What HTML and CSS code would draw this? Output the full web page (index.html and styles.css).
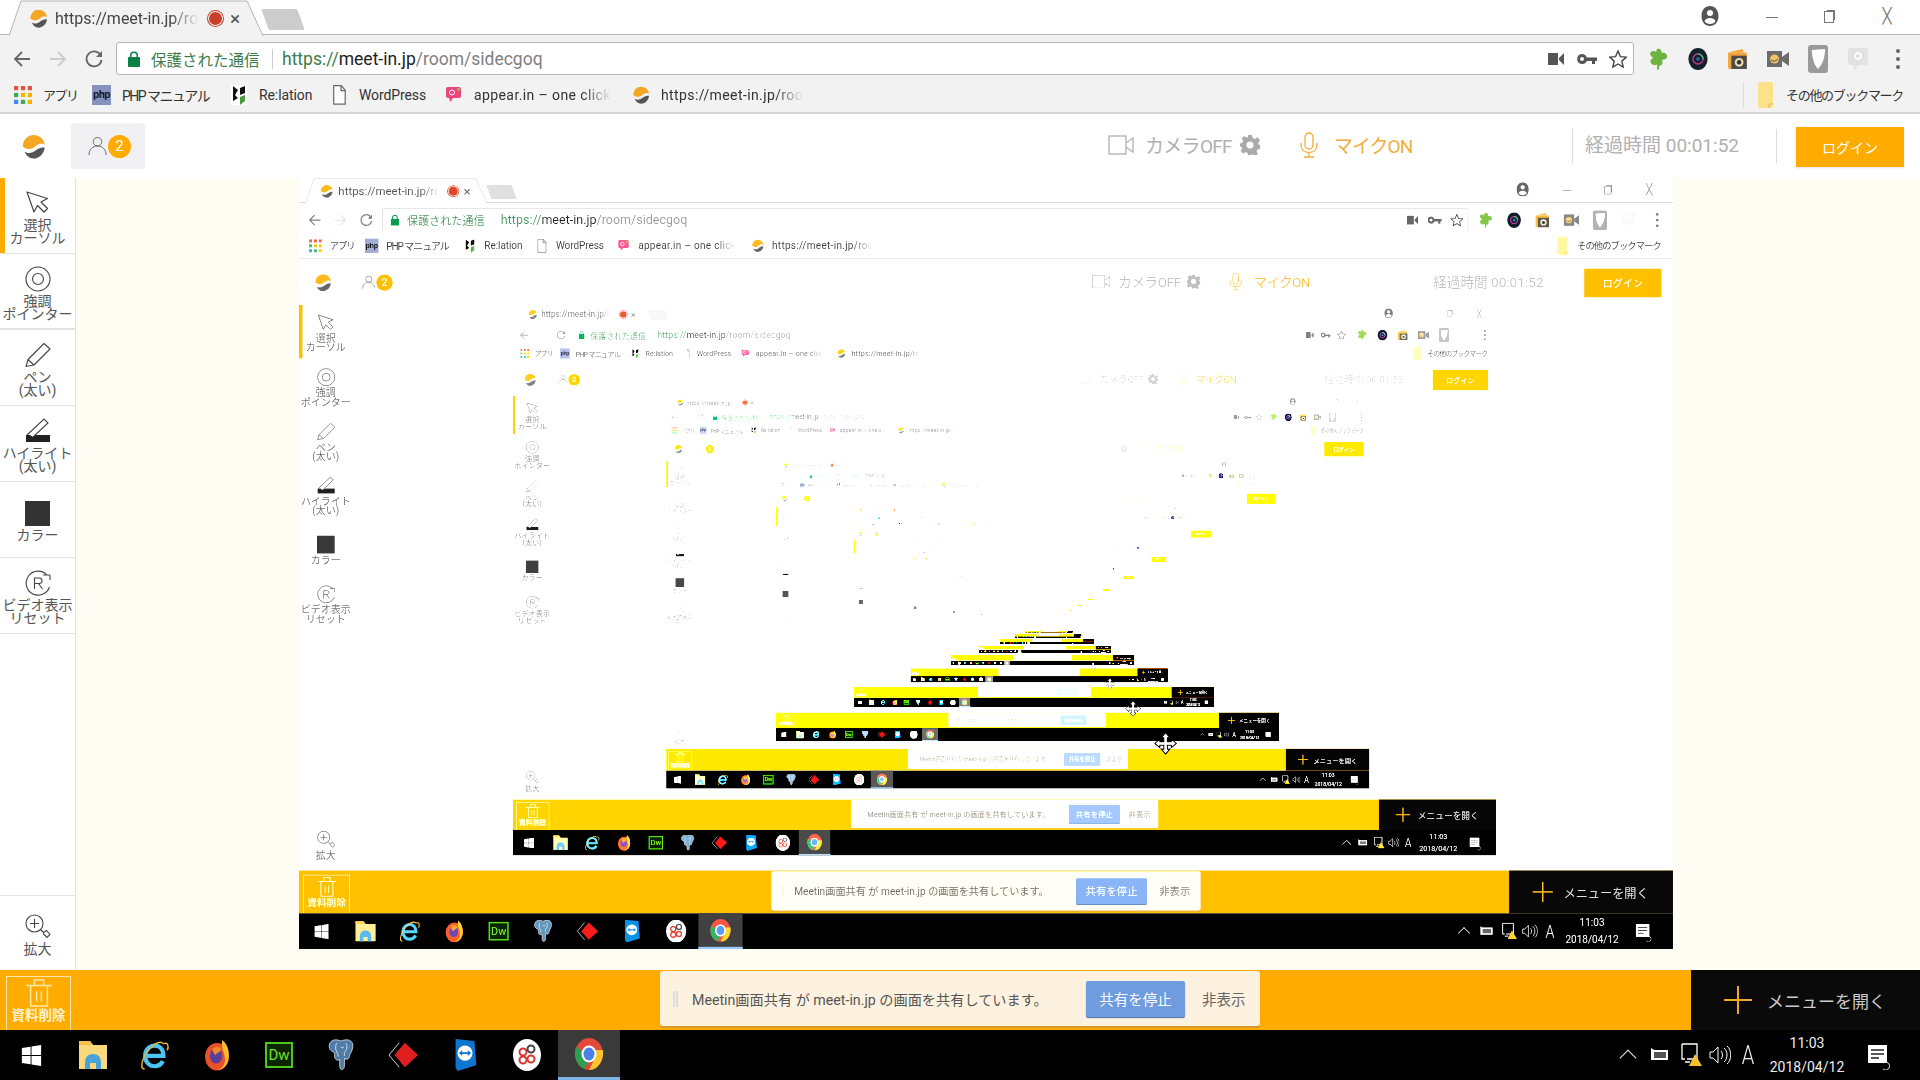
FILE: index.html
```html
<!DOCTYPE html>
<html lang="ja">
<head>
  <meta charset="UTF-8">
  <title>meet-in.jp/room/sidecgoq</title>
  <link rel="stylesheet" href="styles.css">
</head>
<body>

<svg class="sprite" width="0" height="0" aria-hidden="true">
  <defs>
    <!-- what each pass through the screen share does to the colours -->
    <filter id="feedback" color-interpolation-filters="sRGB" x="0" y="0" width="100%" height="100%">
      <feComponentTransfer>
        <feFuncR type="table" tableValues="0 .08 .22 .36 .5 .61 .7 .78 .88 1 1"/>
        <feFuncG type="table" tableValues="0 .08 .22 .36 .5 .61 .7 .78 .88 1 1"/>
        <feFuncB type="table" tableValues="0 .08 .22 .36 .5 .61 .7 .78 .88 1 1"/>
      </feComponentTransfer>
    </filter>
  </defs>

  <symbol id="i-logo" viewBox="0 0 28 28">
    <path fill="#f5a623" d="M2 14C2 6 8 1 14 1c7 0 12 5 12.500 11-4-2.500-7-1-10 1.500-4 3.500-9 5-14.500.5z"/>
    <path fill="#555" d="M4 20c5 3 9 1 13-2 3-2.500 6-3 9.500-3C26 22 20 27.500 14 27.500 9.500 27.500 6 24.500 4 20z"/>
  </symbol>
  <symbol id="i-person" viewBox="0 0 20 20">
    <circle cx="10" cy="5.500" r="4.500" fill="none" stroke="#666"/>
    <path d="M1 19.500c0-6 4-9.500 9-9.500s9 3.500 9 9.500" fill="none" stroke="#666"/>
  </symbol>
  <symbol id="i-camera-off" viewBox="0 0 26 20">
    <path d="M1 1h17v18H1zM18 8l7-5v14l-7-5" fill="none" stroke="#bbb" stroke-width="1.500"/>
  </symbol>
  <symbol id="i-gear" viewBox="0 0 20 20">
    <path fill="#aaa" fill-rule="evenodd" d="M8 0h4l.6 3 2.200 1 2.700-1.700 2.500 3L18.200 8l.3 1.500 1.500.5v4l-2.500.6-1 2 1.500 2.400-3 2.200-2.200-1.900-1.800.5L12 20H8l-.6-2.200-1.900-.7-2.400 1.600-2.500-3 1.700-2.200L1.500 12 0 11.500v-3l2.300-.7.800-2L1.500 3.500l3-2.500 2 1.500L8 2zM10 6.500a3.500 3.500 0 1 0 0 7 3.500 3.500 0 0 0 0-7z"/>
  </symbol>
  <symbol id="i-mic" viewBox="0 0 20 26">
    <rect x="6" y="1" width="8" height="16" rx="4" fill="none" stroke="#f0ae3c" stroke-width="1.300"/>
    <path d="M2 11v2c0 5 3.500 7.500 8 7.500s8-2.500 8-7.500v-2M10 20.500V25M5 25h10" fill="none" stroke="#f0ae3c" stroke-width="1.300"/>
  </symbol>

  <symbol id="i-arrow" viewBox="0 0 26 26">
    <path d="M2 2l7 20 3.500-6.500L19 22l3.500-3.500-6.500-6.500L22.500 8.500z" fill="#fff" stroke="#444" stroke-width="1.200" stroke-linejoin="round"/>
  </symbol>
  <symbol id="i-target" viewBox="0 0 26 26">
    <circle cx="13" cy="13" r="12" fill="none" stroke="#444" stroke-width="1.100"/>
    <circle cx="13" cy="13" r="5.500" fill="none" stroke="#444" stroke-width="1.100"/>
  </symbol>
  <symbol id="i-pen" viewBox="0 0 26 26">
    <path d="M1 24.500l2-7L19 1.500l6 5.500L9 23zM3 17.500l6 5.500" fill="none" stroke="#444" stroke-width="1.100" stroke-linejoin="round"/>
  </symbol>
  <symbol id="i-highlight" viewBox="0 0 26 26">
    <path d="M2 17L19 1l4 4L8 19" fill="none" stroke="#444" stroke-width="1.100"/>
    <path fill="#222" d="M1 17h4l3 2 3-2h14v7H1z"/>
  </symbol>
  <symbol id="i-reset" viewBox="0 0 26 26">
    <path d="M22 5A12 12 0 1 0 24.500 17M25 5h-7M25 5v5" fill="none" stroke="#444" stroke-width="1.100"/>
    <path d="M9.500 19V8h4.500c4 0 4 5.500 0 5.500H9.500M13.500 13.500l4 5.500" fill="none" stroke="#444" stroke-width="1.100"/>
  </symbol>
  <symbol id="i-zoom" viewBox="0 0 26 26">
    <circle cx="9.500" cy="9.500" r="8.500" fill="none" stroke="#444" stroke-width="1.100"/>
    <path d="M5 9.500h9M9.500 5v9M15.500 15.500l3 3M18.500 18.500l3-2 3.500 4-3 3-3.500-3.500z" fill="none" stroke="#444" stroke-width="1.100"/>
  </symbol>
  <symbol id="i-trash" viewBox="0 0 30 30">
    <path d="M1 7h28M10 7V1h10v6M6 7v22h18V7M12.500 13v11M17.500 13v11" fill="none" stroke="#ffe9a8" stroke-width="1.600"/>
  </symbol>

  <symbol id="i-back" viewBox="0 0 18 18">
    <path d="M17 9H2M9 2L2 9l7 7" fill="none" stroke="currentColor" stroke-width="1.800"/>
  </symbol>
  <symbol id="i-reload" viewBox="0 0 18 18">
    <path d="M15.500 5A7.500 7.500 0 1 0 16.500 10" fill="none" stroke="#666" stroke-width="1.800"/>
    <path d="M17 1v6h-6z" fill="#666"/>
  </symbol>
  <symbol id="i-lock" viewBox="0 0 12 16">
    <path fill="#0b8043" d="M1 6h1V4.500a4 4 0 0 1 8 0V6h1a1 1 0 0 1 1 1v8a1 1 0 0 1-1 1H1a1 1 0 0 1-1-1V7a1 1 0 0 1 1-1zm2.500 0h5V4.500a2.500 2.500 0 0 0-5 0z"/>
  </symbol>
  <symbol id="i-video" viewBox="0 0 16 14">
    <path fill="#555" d="M0 1h10v12H0zM11 6l5-5v12l-5-5z"/>
  </symbol>
  <symbol id="i-key" viewBox="0 0 20 12">
    <path fill="#555" fill-rule="evenodd" d="M5 1a5 5 0 0 1 4.800 3.500H20V8h-2v3h-3V8H9.800A5 5 0 1 1 5 1zm0 3a2 2 0 1 0 0 4 2 2 0 0 0 0-4z"/>
  </symbol>
  <symbol id="i-star" viewBox="0 0 18 18">
    <path d="M9 1l2.400 5.600 6 .5-4.600 4 1.400 6L9 14l-5.200 3.100 1.400-6-4.600-4 6-.5z" fill="none" stroke="#444" stroke-width="1.400"/>
  </symbol>
  <symbol id="i-clover" viewBox="0 0 20 22">
    <path fill="#6db33f" d="M9 1c3-1 5 1 4.500 4 3-1 6 1 5.500 4-.5 2.500-3 3-5 2.500 1 3 .5 6-2 6-1 0-1 2-1 4h-2c0-2 .5-4 0-5-3 1.500-6.500 0-6.500-3 0-2 1-3 3-3.500C2 8 1 5 3.500 3.500 5 2.500 7 3 8 4z"/>
  </symbol>
  <symbol id="i-lens" viewBox="0 0 22 24">
    <ellipse cx="11" cy="12" rx="10.500" ry="12" fill="#15202b"/>
    <circle cx="11" cy="12" r="5.500" fill="none" stroke="#c23b8e" stroke-width="1.500"/>
    <path d="M11 6.500a5.500 5.500 0 0 1 5.500 5.500" fill="none" stroke="#3fbf6a" stroke-width="1.500"/>
    <circle cx="11" cy="12" r="2" fill="#1d6fa5"/>
  </symbol>
  <symbol id="i-ext-folder" viewBox="0 0 20 20">
    <path fill="#f2a33a" d="M1 4l13-3 1 3H1z"/>
    <rect x="1" y="4" width="17" height="15" rx="1" fill="#f2a33a"/>
    <rect x="4" y="7" width="14" height="12" fill="#4a4a4a"/>
    <circle cx="11" cy="13" r="4" fill="#e9d9a8"/>
    <circle cx="11" cy="13" r="2" fill="#333"/>
  </symbol>
  <symbol id="i-ext-video" viewBox="0 0 22 18">
    <rect y="1" width="15" height="16" fill="#6c6c6c"/>
    <path fill="#6c6c6c" d="M15 7l7-5v14l-7-5z"/>
    <circle cx="7.500" cy="9" r="4.500" fill="#f0c36a"/>
    <path d="M4 10c2 2 5 1 7-1" stroke="#444" fill="none"/>
  </symbol>
  <symbol id="i-ext-shield" viewBox="0 0 20 28">
    <rect width="20" height="28" rx="3" fill="#9a9a9a"/>
    <path fill="#fff" d="M4 5c4 0 8-1 13-1 0 8-2 15-7 20-4-4-6-11-6-19z"/>
  </symbol>
  <symbol id="i-ext-chat" viewBox="0 0 20 22">
    <rect width="20" height="17" rx="3" fill="#e2e2e2"/>
    <path fill="#e2e2e2" d="M5 16h6l-5 6z"/>
    <circle cx="10" cy="8" r="3" fill="none" stroke="#fff" stroke-width="1.500"/>
  </symbol>

  <symbol id="i-apps" viewBox="0 0 17 17">
    <rect width="4" height="4" fill="#e0533d"/><rect x="6.500" width="4" height="4" fill="#e0533d"/><rect x="13" width="4" height="4" fill="#e0533d"/>
    <rect y="6.500" width="4" height="4" fill="#3bab5a"/><rect x="6.500" y="6.500" width="4" height="4" fill="#f4b400"/><rect x="13" y="6.500" width="4" height="4" fill="#f4b400"/>
    <rect y="13" width="4" height="4" fill="#4285f4"/><rect x="6.500" y="13" width="4" height="4" fill="#3bab5a"/><rect x="13" y="13" width="4" height="4" fill="#f4b400"/>
  </symbol>
  <symbol id="i-relation" viewBox="0 0 16 20">
    <rect width="16" height="20" fill="#fff"/>
    <path fill="#111" d="M2 1l5 4-3 5 3 3-5 3zM9 3l5-2v7l-5 2z"/>
    <path fill="#4c9a3f" d="M9 12l5-2v6l-5 4z"/>
  </symbol>
  <symbol id="i-doc" viewBox="0 0 13 20">
    <path d="M.700.700h7.500l4 4.500v14H.700zM8 .700v5h4.500" fill="#fff" stroke="#666" stroke-width="1.200"/>
  </symbol>
  <symbol id="i-appear" viewBox="0 0 15 15">
    <rect width="15" height="11" rx="2" fill="#e8467c"/>
    <path fill="#e8467c" d="M3 10h5l-4 5z"/>
    <circle cx="6" cy="5.500" r="2.500" fill="none" stroke="#fff"/>
    <rect x="11" y="1" width="3" height="3" fill="#7ac143"/>
  </symbol>
  <symbol id="i-bm-folder" viewBox="0 0 15 26">
    <rect width="15" height="26" rx="2" fill="#fbe188"/>
    <path d="M11 26v-4h4" fill="none" stroke="#e0bd55"/>
  </symbol>
  <symbol id="i-profile" viewBox="0 0 18 20">
    <path fill="#555" fill-rule="evenodd" d="M9 0c5 0 8.500 4 8.500 10S14 20 9 20 .500 16 .500 10 4 0 9 0zm0 4a3 3 0 1 0 0 6 3 3 0 0 0 0-6zM3.500 15c1 2 3 3 5.500 3s4.500-1 5.500-3c-1-2-3-3-5.500-3s-4.500 1-5.500 3z"/>
  </symbol>

  <symbol id="i-win" viewBox="0 0 22 24">
    <path fill="#fff" d="M0 3.500l10-1.500v9.500H0zM11 1.800L22 0v11.500H11zM0 12.500h10V22L0 20.500zM11 12.500h11V24l-11-1.800z"/>
  </symbol>
  <symbol id="i-files" viewBox="0 0 30 32">
    <path fill="#f9d97c" d="M1 2h11l3 4h14v24H1z"/>
    <path fill="#f2c14e" d="M1 2h11l3 4H1z"/>
    <path fill="#4aa3d8" d="M7 24c0-6 3-9 8-9s8 3 8 9v6h-5v-6h-6v6H7z"/>
  </symbol>
  <symbol id="i-ie" viewBox="0 0 32 34">
    <path d="M6 18h19c0-7-4-11-9.500-11S5.500 11.500 5.500 18s4.500 11 10 11c4 0 7-2 9-5.500" fill="none" stroke="#4cc3f1" stroke-width="4.500"/>
    <path d="M25 5C20 0 9 9 4 20c-3 7-3 12 1 12" fill="none" stroke="#e2b93b" stroke-width="1.500"/>
    <path d="M25 5c5-2 6 3 4 7" fill="none" stroke="#e2b93b" stroke-width="1.500"/>
  </symbol>
  <symbol id="i-firefox" viewBox="0 0 28 36">
    <ellipse cx="14" cy="20" rx="13.500" ry="15.500" fill="#e8502a"/>
    <path fill="#ffbd2e" d="M20 1c7 6 8 14 7 21-1 7-6 13-13 13 6-2 9-6 9-12 0-7-5-14-3-22z"/>
    <ellipse cx="13" cy="19" rx="7" ry="8.500" fill="#5a3e9c"/>
    <path fill="#f08a24" d="M9 11c3-3 8-3 11 1-2 0-3 1-3 3-2 0-4 1-4 3-2 0-4-4-4-7z"/>
  </symbol>
  <symbol id="i-pg" viewBox="0 0 30 38">
    <path fill="#4f7ca6" stroke="#e6edf3" stroke-width=".9" d="M1 9c0-5 3-8 8-8 2 0 4 .5 6 1.500C17 1.500 19 1 22 1c5 0 7.500 3.500 7 8-.4 4-2 7-3.500 9.500-1 2-.5 5-3 5.500-1.500.3-2.500-.5-3-1.500-.5 3-.5 7-.5 10 0 3-3 5-4.500 3-1.500-2-1-7-1-11-3 1.500-5.500 0-6-3-.3-2 0-4-1-6C2.500 14 1 12 1 9z"/>
    <path d="M10 5c-2 3-2 8 1 12l1 4M21 5c2 4 1 8-2 11v4M15 9a1.500 1.500 0 1 0 3 0" fill="none" stroke="#e6edf3" stroke-width="1"/>
  </symbol>
  <symbol id="i-diamond" viewBox="0 0 32 30">
    <path d="M12 2L1 15l11 13" fill="none" stroke="#ddd" stroke-width="1"/>
    <path fill="#e02020" d="M18 2l14 13-14 13L7 15z"/>
  </symbol>
  <symbol id="i-tv" viewBox="0 0 24 34">
    <path fill="#0e76d0" d="M2 0l20 2 2 26-20 6-2-4z"/>
    <circle cx="12" cy="15" r="8" fill="#fff"/>
    <path fill="#0e76d0" d="M5.500 15l3.500-3v2h6v-2l3.500 3-3.500 3v-2H9v2z"/>
  </symbol>
  <symbol id="i-flower" viewBox="0 0 28 32">
    <ellipse cx="14" cy="16" rx="14" ry="16" fill="#fff"/>
    <circle cx="10" cy="13" r="3.500" fill="none" stroke="#d9382f" stroke-width="2"/>
    <circle cx="18" cy="10" r="3.500" fill="none" stroke="#444" stroke-width="2"/>
    <circle cx="10" cy="21" r="3.500" fill="none" stroke="#d9382f" stroke-width="2"/>
    <circle cx="18" cy="20" r="3.500" fill="none" stroke="#d9382f" stroke-width="2"/>
  </symbol>
  <symbol id="i-chrome" viewBox="0 0 28 32">
    <ellipse cx="14" cy="16" rx="14" ry="16" fill="#e2493b"/>
    <path fill="#2f9e52" d="M1 9c-3 9 1 20 9 22l5-13z"/>
    <path fill="#f7c52d" d="M28 12c1 9-4 20-14 20l6-12 1-8z"/>
    <ellipse cx="14" cy="16" rx="7.500" ry="8.500" fill="#fff"/>
    <ellipse cx="14" cy="16" rx="5.500" ry="6.500" fill="#4a80e8"/>
  </symbol>
  <symbol id="i-battery" viewBox="0 0 20 16">
    <path d="M1 1l3 2h14v10H1z" fill="#fff"/>
    <rect x="4" y="5" width="12" height="6" fill="#555"/>
  </symbol>
  <symbol id="i-net" viewBox="0 0 22 24">
    <path d="M1 1h15v15H6" fill="none" stroke="#fff" stroke-width="1.300"/>
    <path d="M1 1v15h3M4 19h5" fill="none" stroke="#fff" stroke-width="1.300"/>
    <path fill="#f4c22b" d="M14 11l7 12H8z"/>
  </symbol>
  <symbol id="i-sound" viewBox="0 0 22 22">
    <path d="M1 8h3l5-5v16l-5-5H1zM12 7c2 2 2 6 0 8M15 4c4 3 4 11 0 14M18 2c5 4 5 14 0 18" fill="none" stroke="#fff" stroke-width="1"/>
  </symbol>
  <symbol id="i-note" viewBox="0 0 22 26">
    <rect y="1" width="19" height="18" fill="#fff"/>
    <path d="M3 6h13M3 10h13M3 14h8" stroke="#222" stroke-width="1.300"/>
    <path d="M15 19a4 4 0 1 1 0 6" fill="none" stroke="#ddd"/>
  </symbol>
  <symbol id="i-move" viewBox="0 0 32 32">
    <path d="M16 1l6 7h-3.500v5.500H24V10l7 6-7 6v-3.500h-5.500V24H22l-6 7-6-7h3.500v-5.500H8V22l-7-6 7-6v3.500h5.500V8H10z" fill="#fff" stroke="#000" stroke-width="1.500"/>
  </symbol>
</svg>

<div class="screen">
  <header class="tabstrip">
    <div class="tab">
      <svg class="tab-shape" viewBox="0 0 256 36" preserveAspectRatio="none"><path d="M0 36L12 1h227l16 35" fill="#f2f2f2" stroke="#b4b4b4"/></svg>
      <svg class="ico-tablogo"><use href="#i-logo"/></svg>
      <span class="tab-title fade">https://meet-in.jp/roo</span>
      <span class="rec-dot"></span>
      <span class="tab-close">×</span>
    </div>
    <div class="newtab"></div>
    <div class="winctl">
      <svg class="ico-profile"><use href="#i-profile"/></svg>
      <span class="win-min"></span>
      <span class="win-max"></span>
      <span class="win-x">╳</span>
    </div>
  </header>

  <nav class="toolbar">
    <div class="navbtn"><svg class="ico18"><use href="#i-back"/></svg></div>
    <div class="navbtn is-off"><svg class="ico18"><use href="#i-back"/></svg></div>
    <div class="navbtn"><svg class="ico18"><use href="#i-reload"/></svg></div>
    <div class="urlbox">
      <svg class="ico-lock"><use href="#i-lock"/></svg>
      <span class="secure">保護された通信</span>
      <span class="url-sep"></span>
      <span class="url"><span class="url-scheme">https://</span><span class="url-host">meet-in.jp</span>/room/sidecgoq</span>
      <div class="url-actions">
        <span><svg class="ico-video"><use href="#i-video"/></svg></span>
        <span><svg class="ico-key"><use href="#i-key"/></svg></span>
        <span><svg class="ico18"><use href="#i-star"/></svg></span>
      </div>
    </div>
    <div class="exts">
      <span><svg class="ico-ext"><use href="#i-clover"/></svg></span>
      <span><svg class="ico-ext"><use href="#i-lens"/></svg></span>
      <span><svg class="ico-ext"><use href="#i-ext-folder"/></svg></span>
      <span><svg class="ico-ext"><use href="#i-ext-video"/></svg></span>
      <span><svg class="ico-ext tall"><use href="#i-ext-shield"/></svg></span>
      <span><svg class="ico-ext"><use href="#i-ext-chat"/></svg></span>
      <span class="dots"><i></i><i></i><i></i></span>
    </div>
  </nav>

  <nav class="bookmarks">
    <a class="bm bm-apps"><svg class="ico-bm"><use href="#i-apps"/></svg>アプリ</a>
    <a class="bm bm-php"><span class="php">php</span>PHP マニュアル</a>
    <a class="bm"><svg class="ico-bm"><use href="#i-relation"/></svg>Re:lation</a>
    <a class="bm"><svg class="ico-doc"><use href="#i-doc"/></svg>WordPress</a>
    <a class="bm"><svg class="ico-appear"><use href="#i-appear"/></svg><span class="fade">appear.in – one click</span></a>
    <a class="bm"><svg class="ico-bm"><use href="#i-logo"/></svg><span class="fade">https://meet-in.jp/roo</span></a>
    <a class="bm bm-other"><svg class="ico-folder"><use href="#i-bm-folder"/></svg>その他のブックマーク</a>
  </nav>

  <header class="appbar">
    <svg class="app-logo"><use href="#i-logo"/></svg>
    <div class="userbtn">
      <svg class="ico-person"><use href="#i-person"/></svg>
      <span class="badge">2</span>
    </div>
    <div class="cam">
      <svg class="ico-cam"><use href="#i-camera-off"/></svg>
      <span>カメラOFF</span>
      <svg class="ico-gear"><use href="#i-gear"/></svg>
    </div>
    <div class="mic">
      <svg class="ico-mic"><use href="#i-mic"/></svg>
      <span>マイクON</span>
    </div>
    <div class="timer">経過時間 00:01:52</div>
    <button class="login">ログイン</button>
  </header>

  <div class="stage">
    <aside class="sidebar">
      <div class="tool is-active"><svg class="ico-tool"><use href="#i-arrow"/></svg><span>選択<br>カーソル</span></div>
      <div class="tool is-thick"><svg class="ico-tool"><use href="#i-target"/></svg><span>強調<br>ポインター</span></div>
      <div class="tool"><svg class="ico-tool"><use href="#i-pen"/></svg><span>ペン<br>(太い)</span></div>
      <div class="tool"><svg class="ico-tool"><use href="#i-highlight"/></svg><span>ハイライト<br>(太い)</span></div>
      <div class="tool"><i class="swatch"></i><span>カラー</span></div>
      <div class="tool"><svg class="ico-tool"><use href="#i-reset"/></svg><span>ビデオ表示<br>リセット</span></div>
      <div class="tool tool-zoom"><svg class="ico-tool"><use href="#i-zoom"/></svg><span>拡大</span></div>
    </aside>
    <main class="main">
      <div class="share"></div>
    </main>
  </div>

  <footer class="bottombar">
    <div class="trash">
      <svg class="ico-trash"><use href="#i-trash"/></svg>
      <span>資料削除</span>
    </div>
    <div class="notice">
      <span class="grip"></span>
      <span class="notice-text">Meetin画面共有 が meet-in.jp の画面を共有しています。</span>
      <button class="stop">共有を停止</button>
      <span class="hide">非表示</span>
    </div>
    <div class="menu"><span class="plus"></span>メニューを開く</div>
  </footer>

  <footer class="taskbar">
    <span class="task"><svg class="ico-win"><use href="#i-win"/></svg></span>
    <span class="task"><svg class="ico-task"><use href="#i-files"/></svg></span>
    <span class="task"><svg class="ico-task"><use href="#i-ie"/></svg></span>
    <span class="task"><svg class="ico-task"><use href="#i-firefox"/></svg></span>
    <span class="task"><span class="dw">Dw</span></span>
    <span class="task"><svg class="ico-task"><use href="#i-pg"/></svg></span>
    <span class="task"><svg class="ico-task"><use href="#i-diamond"/></svg></span>
    <span class="task"><svg class="ico-task"><use href="#i-tv"/></svg></span>
    <span class="task"><svg class="ico-task"><use href="#i-flower"/></svg></span>
    <span class="task is-open"><svg class="ico-task"><use href="#i-chrome"/></svg></span>
    <div class="tray">
      <span class="tray-up"></span>
      <span class="tray-bat"><svg><use href="#i-battery"/></svg></span>
      <span class="tray-net"><svg><use href="#i-net"/></svg></span>
      <span class="tray-snd"><svg><use href="#i-sound"/></svg></span>
      <span class="tray-ime">A</span>
      <span class="clock">11:03<br>2018/04/12</span>
      <span class="tray-note"><svg><use href="#i-note"/></svg></span>
    </div>
  </footer>

  <svg class="cursor"><use href="#i-move"/></svg>
</div>

<script src="screen.js"></script>
</body>
</html>
```

FILE: styles.css
```css
* {
  box-sizing: border-box;
}

body {
  margin: 0;
  background: #000;
  font-family: Roboto, "Noto Sans CJK JP", sans-serif;
  color: #333;
}

.sprite {
  position: absolute;
}

svg {
  display: block;
}

/* one whole desktop; the shared area holds a smaller copy of it */
.screen {
  position: relative;
  width: 1920px;
  height: 1080px;
  display: flex;
  flex-direction: column;
  overflow: hidden;
  background: #fff;
}

.share {
  width: 1374px;
  height: 772px;
  margin-left: 223px;
  overflow: hidden;
  filter: url(#feedback);
}

.share > .screen {
  transform: scale(.7156, .7139);
  transform-origin: 0 0;
}

.cursor {
  display: none;
  position: absolute;
  left: 1195px;
  top: 776px;
  width: 32px;
  height: 32px;
}

.share .cursor {
  display: block;
}

.fade {
  white-space: nowrap;
  -webkit-mask-image: linear-gradient(90deg, #000 80%, transparent);
  mask-image: linear-gradient(90deg, #000 80%, transparent);
}

/* tabs */
.tabstrip {
  height: 35px;
  flex: none;
  display: flex;
  background: #fff;
  border-bottom: 1px solid #b4b4b4;
}

.tab {
  position: relative;
  width: 255px;
  height: 36px;
  margin-left: 9px;
  padding-left: 20px;
  display: flex;
  align-items: center;
  font-size: 16px;
  color: #444;
}

.tab-shape {
  position: absolute;
  left: 0;
  top: 0;
  width: 255px;
  height: 36px;
}

.ico-tablogo {
  position: relative;
  width: 19px;
  height: 21px;
}

.tab-title {
  position: relative;
  width: 144px;
  margin-left: 7px;
}

.rec-dot {
  position: relative;
  width: 15px;
  height: 15px;
  margin-left: 9px;
  border-radius: 50%;
  background: #c8402c;
  box-shadow: 0 0 0 1px #f2f2f2 inset, 0 0 0 1px #c8402c;
}

.tab-close {
  position: relative;
  margin-left: 7px;
  font-size: 19px;
  color: #555;
}

.newtab {
  width: 36px;
  height: 21px;
  margin: 9px 0 0 1px;
  background: #ccc;
  border-radius: 2px;
  transform: skewX(20deg);
}

.winctl {
  margin-left: auto;
  display: flex;
  align-items: flex-start;
  padding-top: 6px;
}

.ico-profile {
  width: 18px;
  height: 20px;
  margin-right: 47px;
}

.win-min {
  width: 12px;
  height: 1px;
  margin: 11px 46px 0 0;
  background: #777;
}

.win-max {
  width: 10px;
  height: 12px;
  margin: 5px 49px 0 0;
  border: 1px solid #777;
  box-shadow: 2px -2px 0 -1px #777;
}

.win-x {
  width: 37.500px;
  margin-top: 1px;
  font-size: 15px;
  color: #777;
  font-family: "DejaVu Sans", sans-serif;
}

/* address bar */
.toolbar {
  height: 40px;
  flex: none;
  display: flex;
  align-items: center;
  padding: 7px 0 0 4px;
  background: #f2f2f2;
}

.navbtn {
  width: 36px;
  display: flex;
  justify-content: center;
  color: #666;
}

.navbtn.is-off {
  color: #ccc;
  transform: scaleX(-1);
}

.ico18 {
  width: 18px;
  height: 18px;
}

.urlbox {
  width: 1518px;
  height: 33px;
  margin-left: 4px;
  padding-left: 11px;
  display: flex;
  align-items: center;
  background: #fff;
  border: 1px solid #b4b4b4;
  border-radius: 3px;
}

.ico-lock {
  width: 12px;
  height: 16px;
}

.secure {
  margin-left: 11px;
  width: 111px;
  font-size: 15.500px;
  color: #3a7d4a;
  white-space: nowrap;
}

.url-sep {
  width: 1px;
  height: 20px;
  margin-left: 10px;
  background: #ccc;
}

.url {
  margin-left: 9px;
  font-size: 17.500px;
  color: #808080;
}

.url-scheme {
  color: #3a7d4a;
}

.url-host {
  color: #222;
}

.url-actions {
  margin-left: auto;
  display: flex;
  align-items: center;
}

.url-actions span {
  width: 31px;
  display: flex;
  justify-content: center;
}

.ico-video {
  width: 16px;
  height: 14px;
}

.ico-key {
  width: 20px;
  height: 12px;
}

.exts {
  display: flex;
  align-items: center;
  margin-left: 4px;
}

.exts span {
  width: 40px;
  display: flex;
  justify-content: center;
}

.ico-ext {
  width: 22px;
  height: 22px;
}

.ico-ext.tall {
  height: 28px;
}

.dots {
  flex-direction: column;
  align-items: center;
  gap: 4px;
}

.dots i {
  width: 4px;
  height: 4px;
  border-radius: 50%;
  background: #666;
}

/* bookmarks */
.bookmarks {
  height: 39px;
  flex: none;
  display: grid;
  grid-template-columns: 78px 138px 103px 113px 186px 168px 1fr 177px;
  align-items: center;
  padding: 2px 0 0 14px;
  background: #f2f2f2;
  border-bottom: 2px solid #d4d4d4;
  font-size: 14px;
  color: #333;
}

.bm {
  display: flex;
  align-items: center;
  gap: 11px;
  white-space: nowrap;
  letter-spacing: -.1px;
}

.bm-apps {
  font-size: 13px;
  letter-spacing: -1.500px;
}

.bm-php {
  letter-spacing: -1.500px;
}

.bm .fade {
  letter-spacing: .4px;
}

.ico-bm {
  flex: none;
  width: 18px;
  height: 20px;
}

.ico-appear {
  flex: none;
  width: 15px;
  height: 15px;
  margin-right: 2px;
}

.php {
  flex: none;
  width: 19px;
  height: 20px;
  background: #8892bf;
  color: #111;
  font: 700 10px/20px "Liberation Sans", sans-serif;
  letter-spacing: -.5px;
  text-align: center;
}

.ico-doc {
  width: 13px;
  height: 20px;
  margin-right: 2px;
}

.bm-other {
  grid-column: 8;
  gap: 13px;
  font-size: 13px;
  letter-spacing: -1.300px;
  border-left: 1px solid #ddd;
  padding-left: 14px;
}

.ico-folder {
  flex: none;
  width: 15px;
  height: 26px;
}

/* meeting header */
.appbar {
  height: 64px;
  flex: none;
  display: flex;
  align-items: center;
  padding-left: 21px;
  background: #fff;
}

.app-logo {
  width: 25px;
  height: 27px;
}

.userbtn {
  width: 74px;
  height: 46px;
  margin-left: 25px;
  padding-left: 17px;
  display: flex;
  align-items: center;
  gap: 1px;
  background: #f1f1f4;
  border-radius: 3px;
}

.ico-person {
  width: 19px;
  height: 20px;
}

.badge {
  width: 23px;
  height: 23px;
  border-radius: 50%;
  background: #ffab00;
  color: #fff;
  font-size: 15px;
  line-height: 23px;
  text-align: center;
}

.cam {
  margin: -3px 0 0 963px;
  width: 191px;
  display: flex;
  align-items: center;
  font-size: 19px;
  color: #b0b0b0;
  letter-spacing: -.7px;
}

.ico-cam {
  width: 26px;
  height: 20px;
  margin-right: 11px;
}

.ico-gear {
  width: 20px;
  height: 20px;
  margin-left: 8px;
}

.mic {
  width: 273px;
  margin-top: -3px;
  display: flex;
  align-items: center;
  font-size: 19px;
  color: #f0ae3c;
  letter-spacing: -1px;
}

.ico-mic {
  width: 20px;
  height: 26px;
  margin-right: 15px;
}

.timer {
  width: 205px;
  height: 34px;
  padding-left: 12px;
  border-left: 1px solid #ddd;
  border-right: 1px solid #ddd;
  font-size: 19px;
  line-height: 34px;
  color: #b0b0b0;
  white-space: nowrap;
}

.login {
  width: 108px;
  height: 40px;
  margin: 2px 0 0 19px;
  border: 0;
  background: #ffab00;
  color: #fff;
  font: 14px Roboto, "Noto Sans CJK JP", sans-serif;
  box-shadow: 0 1px 2px rgba(0, 0, 0, .12);
}

/* sidebar + shared screen */
.stage {
  flex: 1;
  min-height: 0;
  display: flex;
}

.sidebar {
  width: 76px;
  flex: none;
  display: flex;
  flex-direction: column;
  background: #fff;
  border-right: 1px solid #e3e3e3;
}

.tool {
  height: 76px;
  padding-top: 12px;
  display: flex;
  flex-direction: column;
  align-items: center;
  border-bottom: 1px solid #e3e3e3;
  font-size: 14px;
  line-height: 13px;
  color: #555;
  text-align: center;
  white-space: nowrap;
}

.tool span {
  margin-top: 3px;
}

.tool.is-active {
  box-shadow: 5px 0 0 #ffab00 inset;
}

.tool.is-thick {
  border-bottom: 2px solid #e3e3e3;
}

.tool-zoom {
  margin-top: auto;
  height: 75px;
  padding-top: 18px;
  border-top: 1px solid #e3e3e3;
  border-bottom: 0;
}

.ico-tool {
  flex: none;
  width: 26px;
  height: 26px;
}

.swatch {
  flex: none;
  width: 25px;
  height: 25px;
  margin-top: 7px;
  background: #333;
}

.main {
  flex: 1;
  min-width: 0;
  background: #fffdf3;
}

/* yellow bar */
.bottombar {
  height: 60px;
  flex: none;
  display: flex;
  background: #ffab00;
}

.trash {
  width: 65px;
  height: 54px;
  margin: 6px 0 0 6px;
  padding-top: 2px;
  display: flex;
  flex-direction: column;
  align-items: center;
  border: 1px solid #ffe9a8;
  border-bottom: 0;
  color: #fff2cc;
  font-size: 13.500px;
  line-height: 14px;
  font-weight: 700;
  white-space: nowrap;
}

.ico-trash {
  width: 30px;
  height: 28px;
  margin-bottom: 1px;
}

.notice {
  width: 600px;
  height: 55px;
  margin: 1px 0 0 589px;
  padding-left: 13px;
  display: flex;
  align-items: center;
  background: #fdf2df;
  border-radius: 3px;
  box-shadow: 0 2px 1px #d59a2a;
}

.grip {
  width: 5px;
  height: 16px;
  border-left: 2px solid #ddd;
  border-right: 2px solid #ddd;
}

.notice-text {
  width: 394px;
  margin-left: 14px;
  font-size: 14.200px;
  color: #555;
  white-space: nowrap;
}

.stop {
  width: 99px;
  height: 36px;
  border: 0;
  border-radius: 2px;
  background: #6f9bdf;
  color: #fff;
  font: 14.500px Roboto, "Noto Sans CJK JP", sans-serif;
  box-shadow: 0 1px 1px #4a6ca3;
}

.hide {
  margin-left: 17px;
  font-size: 14.500px;
  color: #666;
}

.menu {
  width: 229px;
  margin-left: auto;
  padding-left: 33px;
  display: flex;
  align-items: center;
  background: #0a0a0a;
  color: #ccc;
  font-size: 17px;
  white-space: nowrap;
}

.plus {
  position: relative;
  width: 28px;
  height: 28px;
  margin-right: 15px;
  background:
    linear-gradient(#f5a623, #f5a623) center / 28px 2px no-repeat,
    linear-gradient(#f5a623, #f5a623) center / 2px 28px no-repeat;
}

/* windows taskbar */
.taskbar {
  height: 50px;
  flex: none;
  display: flex;
  background: #000;
}

.task {
  width: 62px;
  display: flex;
  align-items: center;
  justify-content: center;
}

.task.is-open {
  background: #3a3a3a;
  border-bottom: 3px solid #7fb5e6;
}

.ico-win {
  width: 21px;
  height: 21px;
}

.ico-task {
  width: 30px;
  height: 32px;
}

.dw {
  width: 28px;
  height: 26px;
  border: 2px solid #4fc61c;
  background: #0d2404;
  color: #6fe02a;
  font-size: 15px;
  line-height: 22px;
  text-align: center;
}

.tray {
  margin-left: auto;
  display: flex;
  align-items: center;
  color: #eee;
}

.tray > span {
  display: flex;
  justify-content: center;
}

.tray-up {
  width: 30px;
}

.tray-up::before {
  content: "";
  width: 11px;
  height: 11px;
  margin-top: 6px;
  border-left: 1px solid #eee;
  border-top: 1px solid #eee;
  transform: rotate(45deg);
}

.tray-bat {
  width: 34px;
}

.tray-bat svg {
  width: 20px;
  height: 16px;
}

.tray-net {
  width: 30px;
}

.tray-net svg {
  width: 22px;
  height: 24px;
}

.tray-snd {
  width: 26px;
}

.tray-snd svg {
  width: 22px;
  height: 22px;
}

.tray-ime {
  width: 30px;
  font-size: 25px;
  font-weight: 300;
  transform: scaleX(.8);
}

.clock {
  width: 88px;
  font-size: 14px;
  line-height: 24px;
  text-align: center;
  white-space: nowrap;
}

.tray-note {
  width: 56px;
  margin-right: 13px;
  padding-top: 3px;
}

.tray-note svg {
  width: 22px;
  height: 26px;
}
```

FILE: screen.js
```js
// the shared area shows the meeting page itself, so it repeats inward
const DEPTH = 11;
const TEXT_DEPTH = 8; // past this the letters are too small to have any size

const root = document.querySelector('.screen');
const blank = root.cloneNode(true);

// same desktop without any lettering
const bare = blank.cloneNode(true);
const walker = document.createTreeWalker(bare, NodeFilter.SHOW_TEXT);
while (walker.nextNode()) {
  walker.currentNode.nodeValue = '';
}

let share = root.querySelector('.share');
for (let i = 0; i < DEPTH; i++) {
  const copy = (i < TEXT_DEPTH ? blank : bare).cloneNode(true);
  share.appendChild(copy);
  share = copy.querySelector('.share');
}
```
